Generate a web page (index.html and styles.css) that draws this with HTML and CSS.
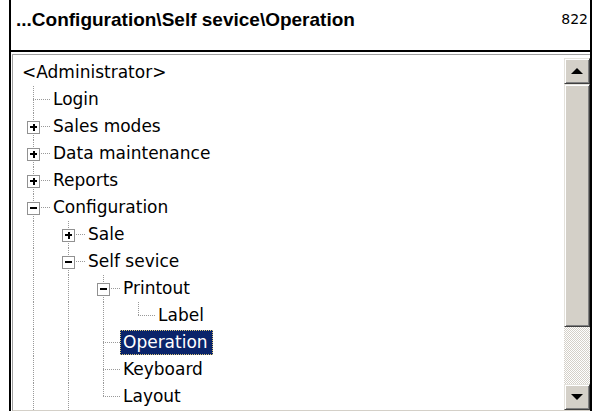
FILE: index.html
```html
<!DOCTYPE html>
<html lang="en">
<head>
    <meta charset="UTF-8">
    <title>Operation</title>
    <link rel="stylesheet" href="styles.css">
</head>
<body>

    <div class="window">
        <div class="header">
            <span class="title">...Configuration\Self sevice\Operation</span>
            <span class="count">822</span>
        </div>

        <div class="panel">
            <div class="tree">
                <div class="row root"><span class="label">&lt;Administrator&gt;</span></div>
                <div class="row"><span class="cell tee"></span><span class="label">Login</span></div>
                <div class="row"><span class="cell tee"><span class="expander plus"></span></span><span class="label">Sales modes</span></div>
                <div class="row"><span class="cell tee"><span class="expander plus"></span></span><span class="label">Data maintenance</span></div>
                <div class="row"><span class="cell tee"><span class="expander plus"></span></span><span class="label">Reports</span></div>
                <div class="row"><span class="cell tee"><span class="expander"></span></span><span class="label">Configuration</span></div>
                <div class="row"><span class="cell pipe"></span><span class="cell tee"><span class="expander plus"></span></span><span class="label">Sale</span></div>
                <div class="row"><span class="cell pipe"></span><span class="cell tee"><span class="expander"></span></span><span class="label">Self sevice</span></div>
                <div class="row"><span class="cell pipe"></span><span class="cell pipe"></span><span class="cell tee"><span class="expander"></span></span><span class="label">Printout</span></div>
                <div class="row"><span class="cell pipe"></span><span class="cell pipe"></span><span class="cell pipe"></span><span class="cell elbow"></span><span class="label">Label</span></div>
                <div class="row"><span class="cell pipe"></span><span class="cell pipe"></span><span class="cell tee"></span><span class="label selected">Operation</span></div>
                <div class="row"><span class="cell pipe"></span><span class="cell pipe"></span><span class="cell tee"></span><span class="label">Keyboard</span></div>
                <div class="row"><span class="cell pipe"></span><span class="cell pipe"></span><span class="cell elbow"></span><span class="label">Layout</span></div>
            </div>

            <div class="scrollbar">
                <div class="sb-btn raised"><span class="arrow up"></span></div>
                <div class="sb-thumb raised"></div>
                <div class="sb-track"></div>
                <div class="sb-btn raised"><span class="arrow down"></span></div>
            </div>
        </div>
    </div>

</body>
</html>
```

FILE: styles.css
```css
* {
    box-sizing: border-box;
}
body {
    margin: 0;
    background-color: #fff;
    color: #000;
    font-family: "DejaVu Sans", Verdana, sans-serif;
}
.window {
    margin-left: 9px;
    width: 583px;
    border-left: 2px solid #000;
    border-right: 2px solid #000;
}
.header {
    height: 52px;
    border-bottom: 2px solid #000;
    display: flex;
    justify-content: space-between;
    align-items: flex-start;
    padding: 9px 2px 0 5px;
}
.title {
    font-family: "Liberation Sans", Arial, sans-serif;
    font-weight: bold;
    font-size: 19px;
    line-height: 21px;
}
.count {
    font-size: 14px;
    line-height: 16px;
    margin-top: 2px;
}
.panel {
    display: flex;
    height: 357px;
    margin: 2px 0 0 1px;
    padding-top: 3px;
    border-top: 1px solid #a0a0a0;
    border-left: 1px solid #a0a0a0;
    border-bottom: 1px solid #d4d0c8;
}
.tree {
    flex: 1;
    overflow: hidden;
    padding: 1px 0 0 2px;
}
.row {
    display: flex;
    align-items: center;
    height: 27px;
    font-size: 17px;
}
.cell {
    flex: none;
    width: 35px;
    height: 100%;
    display: flex;
    align-items: center;
}
/* tree guide lines */
.pipe {
    background: repeating-linear-gradient(#999 0 1px, transparent 1px 2px) 18px 0 / 1px 100% no-repeat;
}
.tee {
    background:
        repeating-linear-gradient(#999 0 1px, transparent 1px 2px) 18px 0 / 1px 100% no-repeat,
        repeating-linear-gradient(90deg, #999 0 1px, transparent 1px 2px) 18px 13px / 17px 1px no-repeat;
}
.elbow {
    background:
        repeating-linear-gradient(#999 0 1px, transparent 1px 2px) 18px 0 / 1px 14px no-repeat,
        repeating-linear-gradient(90deg, #999 0 1px, transparent 1px 2px) 18px 13px / 17px 1px no-repeat;
}
.expander {
    flex: none;
    width: 13px;
    height: 13px;
    margin: 1px 0 0 12px;
    border: 1px solid #919191;
    background:
        linear-gradient(#000, #000) center / 7px 2px no-repeat,
        #fff;
}
.expander.plus {
    background:
        linear-gradient(#000, #000) center / 7px 2px no-repeat,
        linear-gradient(#000, #000) center / 2px 7px no-repeat,
        #fff;
}
.label {
    padding: 0 4px 0 2px;
    border: 1px dotted transparent;
    line-height: 23px;
    white-space: nowrap;
}
.root .label {
    margin-left: 4px;
}
.label.selected {
    background-color: #0a246a;
    color: #fff;
    border-color: #d8c47a;
}
.scrollbar {
    flex: none;
    width: 26px;
    display: flex;
    flex-direction: column;
}
.raised {
    background-color: #d4d0c8;
    border: 1px solid;
    border-color: #e4e2dc #404040 #404040 #e4e2dc;
    box-shadow: inset 1px 1px 0 #fff, inset -1px -1px 0 #808080;
}
.sb-btn {
    height: 26px;
    display: flex;
    align-items: center;
    justify-content: center;
}
.sb-thumb {
    height: 243px;
}
.sb-track {
    flex: 1;
    background: repeating-conic-gradient(#d4d0c8 0 25%, #fff 0 50%) 0 0 / 2px 2px;
}
.arrow {
    width: 0;
    height: 0;
    border-left: 6px solid transparent;
    border-right: 6px solid transparent;
}
.arrow.up {
    border-bottom: 6px solid #000;
}
.arrow.down {
    border-top: 6px solid #000;
}
```
